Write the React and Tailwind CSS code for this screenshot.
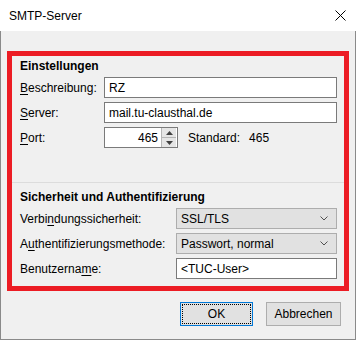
import React from "react";

const font = { fontFamily: '"Liberation Sans", Arial, sans-serif' };

function Mn({ children }) {
  return <span className="underline underline-offset-2">{children}</span>;
}

function Row({ label, labelWidth, children }) {
  return (
    <div className="flex items-center h-[21px]">
      <div className={`${labelWidth} shrink-0 text-[12px] leading-4`}>{label}</div>
      <div className="flex-1 flex items-center h-full">{children}</div>
    </div>
  );
}

function TextBox({ value, className = "" }) {
  return (
    <div
      className={`h-full bg-white border border-[#7a7a7a] flex items-center px-[4px] text-[12px] leading-4 ${className}`}
    >
      {value}
    </div>
  );
}

function Select({ value }) {
  return (
    <div className="h-full w-full bg-[#e1e1e1] border border-[#adadad] flex items-center justify-between pl-[4px] pr-[6px] text-[12px] leading-4">
      <span>{value}</span>
      <svg width="8" height="5" viewBox="0 0 8 5" className="mr-[2px]">
        <path d="M0.5 0.5 L4 4 L7.5 0.5" fill="none" stroke="#505050" strokeWidth="1" />
      </svg>
    </div>
  );
}

function PortBox() {
  return (
    <div className="h-full w-[74px] bg-white border border-[#7a7a7a] flex items-center">
      <div className="flex-1 text-right pr-[3px] text-[12px] leading-4">465</div>
      <div className="flex flex-col w-[15px] h-[19px] mr-[1px] border-l border-[#b5b5b5]">
        <div className="flex-1 bg-[#e5e5e5] border-b border-[#b5b5b5] flex items-center justify-center">
          <svg width="7" height="4" viewBox="0 0 7 4">
            <path d="M0 4 L3.5 0 L7 4 Z" fill="#404040" />
          </svg>
        </div>
        <div className="flex-1 bg-[#e5e5e5] flex items-center justify-center">
          <svg width="7" height="4" viewBox="0 0 7 4">
            <path d="M0 0 L3.5 4 L7 0 Z" fill="#404040" />
          </svg>
        </div>
      </div>
    </div>
  );
}

export default function App() {
  return (
    <div className="w-[358px] h-[340px] bg-white text-black" style={font}>
      <div className="w-[356px] h-[340px] flex flex-col">
        <div className="h-[31px] bg-white flex items-center justify-between pl-[9px] pr-[10px]">
          <span className="text-[12px] leading-4">SMTP-Server</span>
          <svg width="11" height="11" viewBox="0 0 11 11">
            <path d="M0.5 0.5 L10.5 10.5 M10.5 0.5 L0.5 10.5" stroke="#000" strokeWidth="1" />
          </svg>
        </div>
        <div className="flex-1 bg-[#f0f0f0] border-l border-r border-b border-[#8a8a8a] flex flex-col pl-[6px] pr-[6px] pt-[20px]">
          <div className="w-[342px] h-[240px] border-[5px] border-[#ec1c24] flex flex-col">
            <div className="pl-[8px] pr-[7px] pt-[2px]">
              <div className="text-[12px] leading-4 font-bold h-[16px]">Einstellungen</div>
              <div className="flex flex-col gap-[4px] mt-[3px]">
                <Row
                  labelWidth="w-[84px]"
                  label={
                    <>
                      <Mn>B</Mn>eschreibung:
                    </>
                  }
                >
                  <TextBox value="RZ" className="w-full" />
                </Row>
                <Row
                  labelWidth="w-[84px]"
                  label={
                    <>
                      <Mn>S</Mn>erver:
                    </>
                  }
                >
                  <TextBox value="mail.tu-clausthal.de" className="w-full" />
                </Row>
                <Row
                  labelWidth="w-[84px]"
                  label={
                    <>
                      <Mn>P</Mn>ort:
                    </>
                  }
                >
                  <PortBox />
                  <span className="text-[12px] leading-4 ml-[10px]">Standard:</span>
                  <span className="text-[12px] leading-4 ml-[9px]">465</span>
                </Row>
              </div>
            </div>
            <div className="h-[1px] bg-[#dcdcdc] mt-[34px]" />
            <div className="pl-[8px] pr-[7px] pt-[6px]">
              <div className="text-[12px] leading-4 font-bold h-[16px]">
                Sicherheit und Authentifizierung
              </div>
              <div className="flex flex-col gap-[4px] mt-[3px]">
                <Row
                  labelWidth="w-[156px]"
                  label={
                    <>
                      Verbi<Mn>n</Mn>dungssicherheit:
                    </>
                  }
                >
                  <Select value="SSL/TLS" />
                </Row>
                <Row
                  labelWidth="w-[156px]"
                  label={
                    <>
                      A<Mn>u</Mn>thentifizierungsmethode:
                    </>
                  }
                >
                  <Select value="Passwort, normal" />
                </Row>
                <Row
                  labelWidth="w-[156px]"
                  label={
                    <>
                      Benutzerna<Mn>m</Mn>e:
                    </>
                  }
                >
                  <TextBox value="<TUC-User>" className="w-full" />
                </Row>
              </div>
            </div>
          </div>
          <div className="flex justify-end gap-[13px] mt-[11px] pr-[8px]">
            <div className="w-[73px] h-[24px] border border-[#0078d7] bg-[#e1e1e1] p-[1px]">
              <div className="w-full h-full border border-dotted border-black flex items-center justify-center text-[12px] leading-4">
                OK
              </div>
            </div>
            <div className="w-[75px] h-[24px] border border-[#adadad] bg-[#e1e1e1] flex items-center justify-center text-[12px] leading-4">
              Abbrechen
            </div>
          </div>
        </div>
      </div>
    </div>
  );
}
